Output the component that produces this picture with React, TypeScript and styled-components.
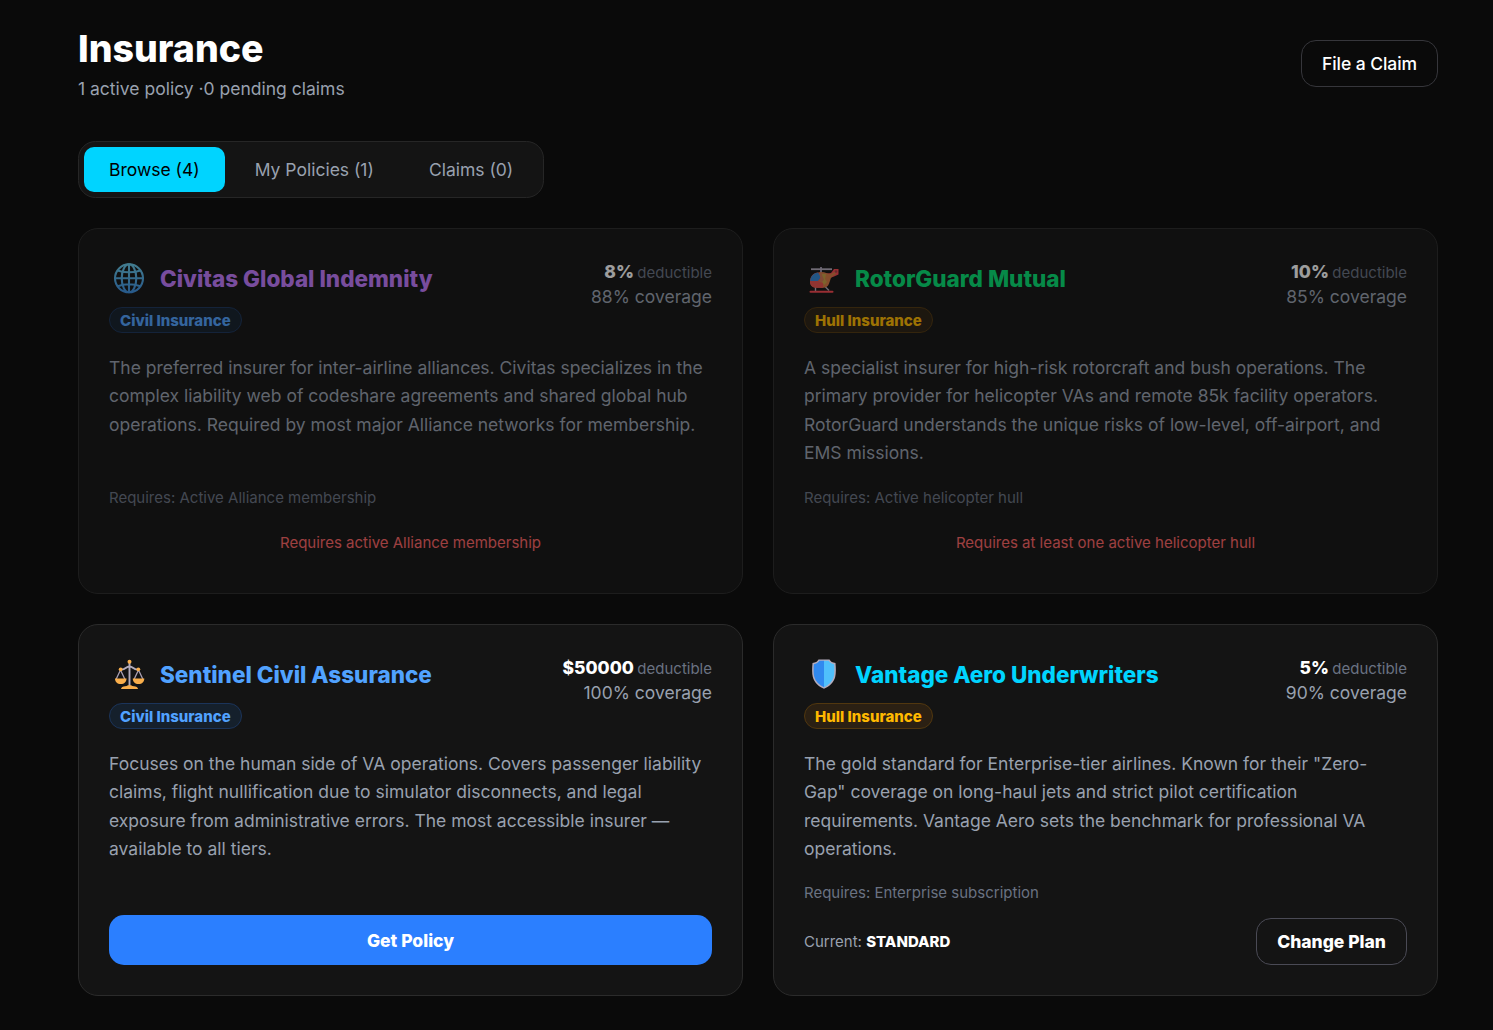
import React from "react";
import styled, { createGlobalStyle } from "styled-components";

const GlobalStyle = createGlobalStyle`
  * { box-sizing: border-box; }
  body {
    margin: 0;
    background: #0a0a0a;
    color: #fff;
    font-family: Inter, "Liberation Sans", sans-serif;
    font-size: 17.5px;
    line-height: 25px;
  }
  button { font: inherit; cursor: pointer; }
`;

const Page = styled.main`
  width: 1493px;
  min-height: 1030px;
  padding: 26px 55px 34px 78px;
`;

const Header = styled.header`
  display: flex;
  align-items: center;
  justify-content: space-between;
  height: 75px;
  margin-bottom: 40px;
`;

const Title = styled.h1`
  margin: 0 0 5px;
  font-size: 37.5px;
  line-height: 45px;
  font-weight: 800;
`;

const Subtitle = styled.p`
  margin: 0;
  color: #99a1af;
`;

const OutlineButton = styled.button<{ $bold?: boolean }>`
  height: 47px;
  padding: 10px 20px;
  border: 1px solid ${(p) => (p.$bold ? "#4a4a55" : "#36363b")};
  border-radius: 15px;
  background: transparent;
  color: #fff;
  font-weight: ${(p) => (p.$bold ? 800 : 500)};
  letter-spacing: ${(p) => (p.$bold ? "normal" : "-0.07px")};
`;

const Tabs = styled.nav`
  display: flex;
  gap: 5px;
  width: fit-content;
  margin-bottom: 30px;
  padding: 5px;
  border: 1px solid #262626;
  border-radius: 17.5px;
  background: #141414;
`;

const Tab = styled.button<{ $active?: boolean }>`
  height: 45px;
  padding: 10px 25px;
  border: 0;
  border-radius: 10px;
  background: ${(p) => (p.$active ? "#00d4ff" : "transparent")};
  color: ${(p) => (p.$active ? "#000" : "#99a1af")};
`;

const Grid = styled.section`
  display: grid;
  grid-template-columns: 1fr 1fr;
  grid-template-rows: 366px 372px;
  gap: 30px;
`;

const Card = styled.article<{ $locked?: boolean }>`
  display: flex;
  flex-direction: column;
  padding: 30px;
  border: 1px solid #2b2b2b;
  border-radius: 20px;
  background: #141414;
  opacity: ${(p) => (p.$locked ? 0.6 : 1)};
`;

const CardTop = styled.div`
  display: flex;
  flex-shrink: 0;
  justify-content: space-between;
  height: 75px;
  margin-bottom: 20px;
`;

const NameRow = styled.div`
  display: flex;
  align-items: center;
  gap: 10px;
  height: 40px;
  margin-bottom: 8px;
  svg { display: block; }
`;

const Name = styled.h3<{ $color: string }>`
  margin: 0 0 2px;
  color: ${(p) => p.$color};
  font-size: 22.5px;
  line-height: 35px;
  font-weight: 800;
`;

const Badge = styled.span<{ $kind: Kind }>`
  display: block;
  width: fit-content;
  height: 26px;
  padding: 2px 10px;
  border: 1px solid ${(p) => (p.$kind === "Civil" ? "#1b345a" : "#51370f")};
  border-radius: 13px;
  background: ${(p) => (p.$kind === "Civil" ? "#15202c" : "#2b2013")};
  color: ${(p) => (p.$kind === "Civil" ? "#51a2ff" : "#ffb900")};
  font-size: 15px;
  line-height: 21px;
  font-weight: 800;
`;

const Terms = styled.div`
  text-align: right;
  color: #99a1af;
`;

const Deductible = styled.div`
  height: 25px;
  color: #6a7282;
  font-size: 15px;
  strong {
    margin-right: -0.8px;
    color: #fff;
    font-size: 17.5px;
    font-weight: 800;
  }
`;

const Description = styled.p`
  flex: 1;
  margin: 0 0 19.25px;
  color: #99a1af;
  line-height: 28.4375px;
`;

const Requirement = styled.p`
  margin: 0 0 15px;
  color: #6a7282;
  font-size: 15px;
  line-height: 20px;
`;

const LockNote = styled.p`
  margin: 0;
  padding: 10px 0;
  color: #ff6467;
  font-size: 15px;
  line-height: 20px;
  text-align: center;
`;

const PrimaryButton = styled.button`
  height: 50px;
  border: 0;
  border-radius: 15px;
  background: #2b7fff;
  color: #fff;
  font-weight: 800;
`;

const PlanRow = styled.div`
  display: flex;
  align-items: center;
  justify-content: space-between;
`;

const Current = styled.span`
  color: #99a1af;
  font-size: 15px;
  strong { color: #fff; font-weight: 800; }
`;

const Globe = () => (
  <svg width="41" height="40" viewBox="0 0 41 40">
    <defs>
      <linearGradient id="globe" x1="0" y1="0" x2="0" y2="1">
        <stop offset="0" stopColor="#68c8e8" />
        <stop offset="1" stopColor="#3c8fe0" />
      </linearGradient>
    </defs>
    <g fill="none" stroke="url(#globe)" strokeWidth="2.1">
      <circle cx="20" cy="19.3" r="14" />
      <ellipse cx="20" cy="19.3" rx="7.3" ry="14" />
      <path d="M20.01 5.2L20 33.4M5.9 19.3L34.1 19.31M8.5 11.4Q20 15.2 31.5 11.4M8.5 27.2Q20 23.4 31.5 27.2" />
    </g>
  </svg>
);

const Helicopter = () => (
  <svg width="41" height="40" viewBox="4 0 41 40">
    <path d="M21 8v6" stroke="#998ea5" strokeWidth="2" />
    <path d="M11 10.2h21" stroke="#b4acbc" strokeWidth="1.8" />
    <path d="M23 15L31 14l3-4h4.500v5.500L34 17.500l-8 3z" fill="#f8474f" />
    <path d="M15.500 28v4M25 27.500l4 4" stroke="#b4acbc" strokeWidth="1.4" />
    <path d="M10.500 32.800h22" stroke="#f8474f" strokeWidth="2" strokeLinecap="round" />
    <path d="M20 13.200c-7.500 0-10 5-10 9.500 0 4 2.500 6 7 6h4c4.500 0 7-3 7-8 0-4-2-7.500-8-7.500z" fill="#e95d4c" />
    <path d="M20 13.200h4l6 2 5-2.500 1 2-5 4-2 6c-1 2.500-3 4-6 4h-3l4-4-3-4z" fill="#d77b43" />
    <path d="M22 15h4l-1 5 2 3-3 3-3-5z" fill="#c9a044" />
    <path d="M18 13.500c-5 1-7.500 4-7.800 8.500H18l3-4z" fill="#3287d5" />
    <path d="M19 13.400h2l3 7-3 4h-3l2.500-5z" fill="#d17754" />
    <path d="M10 22h8l5 2.500v4.200h-6c-4.500 0-7-2.500-7-6.700z" fill="#e9504c" />
    <circle cx="36" cy="12.500" r="1.300" fill="#a93e40" />
  </svg>
);

const Scales = () => (
  <svg width="41" height="40" viewBox="0 0 41 40">
    <path d="M20.500 7v24M11.500 14.500c5 1 5-3 9-3s4 4 9 3" fill="none" stroke="#b4acbc" strokeWidth="1.9" />
    <path d="M11.500 15L7 24.500M11.500 15l4.500 9.500M29.500 15L25 24.500M29.500 15l4.500 9.500" stroke="#a99fb2" strokeWidth="1.3" />
    <g fill="#f9ae4b">
      <circle cx="20.500" cy="6.700" r="2" />
      <circle cx="11.700" cy="14.300" r="1.900" />
      <circle cx="29.300" cy="14.300" r="1.900" />
      <path d="M6 23.500h11.500c0 3.500-2.200 5.500-5.700 5.500s-5.800-2-5.800-5.500zM23.800 23.500h11.500c0 3.500-2.200 5.500-5.700 5.500s-5.800-2-5.800-5.500zM12 34c0-1.800 2-2.600 4-2.800 1.200-.1 2-.4 3-1h3c1 .6 1.800.9 3 1 2 .2 4 1 4 2.800z" />
    </g>
  </svg>
);

const Shield = () => (
  <svg width="41" height="40" viewBox="0 0 41 40">
    <path d="M20 4.500h5.500c1 2 3 3.200 6 3.500.5 5.500.6 10-.3 14-1.500 5.500-5.500 9.500-11.200 11.700C14.300 31.500 10.300 27.500 8.800 22c-.9-4-.8-8.500-.3-14 3-.3 5-1.500 6-3.500z" fill="#b4acbc" />
    <path d="M20 5.800h-4.600C14.200 7.700 12.300 9 9.900 9.300c-.4 4.700-.4 8.500.3 12.200 1.300 4.900 4.600 8.500 9.800 10.700z" fill="#3089ef" />
    <path d="M20 5.800h4.600c1.200 1.900 3.100 3.200 5.500 3.500.4 4.700.4 8.500-.3 12.200-1.300 4.900-4.600 8.500-9.800 10.700z" fill="#50c0fc" />
  </svg>
);

type Kind = "Civil" | "Hull";

interface Insurer {
  name: string;
  color: string;
  kind: Kind;
  icon: React.ReactNode;
  deductible: string;
  coverage: string;
  description: string;
  requires?: string;
  lock?: string;
  current?: string;
}

const insurers: Insurer[] = [
  {
    name: "Civitas Global Indemnity", color: "#c27aff", kind: "Civil", icon: <Globe />,
    deductible: "8%", coverage: "88%",
    description: "The preferred insurer for inter-airline alliances. Civitas specializes in the complex liability web of codeshare agreements and shared global hub operations. Required by most major Alliance networks for membership.",
    requires: "Active Alliance membership", lock: "Requires active Alliance membership",
  },
  {
    name: "RotorGuard Mutual", color: "#05df72", kind: "Hull", icon: <Helicopter />,
    deductible: "10%", coverage: "85%",
    description: "A specialist insurer for high-risk rotorcraft and bush operations. The primary provider for helicopter VAs and remote 85k facility operators. RotorGuard understands the unique risks of low-level, off-airport, and EMS missions.",
    requires: "Active helicopter hull", lock: "Requires at least one active helicopter hull",
  },
  {
    name: "Sentinel Civil Assurance", color: "#51a2ff", kind: "Civil", icon: <Scales />,
    deductible: "$50000", coverage: "100%",
    description: "Focuses on the human side of VA operations. Covers passenger liability claims, flight nullification due to simulator disconnects, and legal exposure from administrative errors. The most accessible insurer — available to all tiers.",
  },
  {
    name: "Vantage Aero Underwriters", color: "#00d4ff", kind: "Hull", icon: <Shield />,
    deductible: "5%", coverage: "90%",
    description: "The gold standard for Enterprise-tier airlines. Known for their \"Zero-Gap\" coverage on long-haul jets and strict pilot certification requirements. Vantage Aero sets the benchmark for professional VA operations.",
    requires: "Enterprise subscription", current: "STANDARD",
  },
];

const InsurerCard = ({ item }: { item: Insurer }) => (
  <Card $locked={!!item.lock}>
    <CardTop>
      <div>
        <NameRow>
          {item.icon}
          <Name $color={item.color}>{item.name}</Name>
        </NameRow>
        <Badge $kind={item.kind}>{item.kind} Insurance</Badge>
      </div>
      <Terms>
        <Deductible><strong>{item.deductible}</strong> deductible</Deductible>
        <div>{item.coverage} coverage</div>
      </Terms>
    </CardTop>
    <Description>{item.description}</Description>
    {item.requires && <Requirement>Requires: {item.requires}</Requirement>}
    {item.lock && <LockNote>{item.lock}</LockNote>}
    {item.current && (
      <PlanRow>
        <Current>Current: <strong>{item.current}</strong></Current>
        <OutlineButton $bold>Change Plan</OutlineButton>
      </PlanRow>
    )}
    {!item.lock && !item.current && <PrimaryButton>Get Policy</PrimaryButton>}
  </Card>
);

export default function App() {
  return (
    <>
      <GlobalStyle />
      <Page>
        <Header>
          <div>
            <Title>Insurance</Title>
            <Subtitle>1 active policy ·0 pending claims</Subtitle>
          </div>
          <OutlineButton>File a Claim</OutlineButton>
        </Header>
        <Tabs>
          <Tab $active>Browse (4)</Tab>
          <Tab>My Policies (1)</Tab>
          <Tab>Claims (0)</Tab>
        </Tabs>
        <Grid>
          {insurers.map((item) => <InsurerCard key={item.name} item={item} />)}
        </Grid>
      </Page>
    </>
  );
}
